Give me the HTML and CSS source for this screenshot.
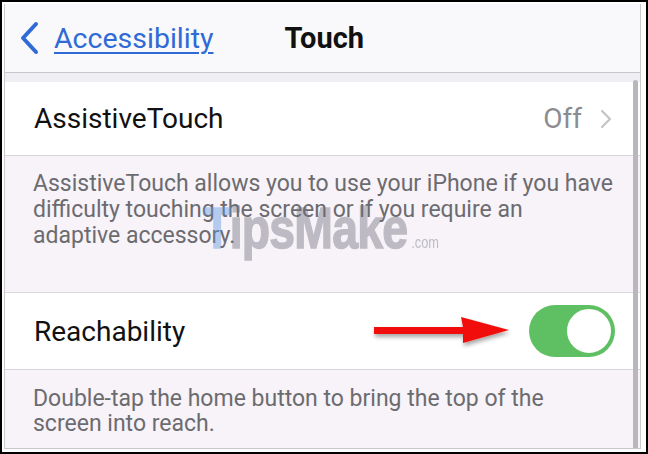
FILE: index.html
```html
<!doctype html>
<html lang="en">
    <head>
        <meta charset="UTF-8" />
        <title>Touch</title>
        <link rel="stylesheet" href="styles.css">
    </head>
    <body>
        <div class="frame">
            <div class="screen">
                <div class="navbar">
                    <a class="back" href="#">
                        <svg class="back-chevron" width="20" height="34" viewBox="0 0 20 34">
                            <path d="M17 3 L4 17 L17 31" fill="none" stroke="#2f6ad6" stroke-width="4" stroke-linecap="round" stroke-linejoin="round"/>
                        </svg>
                        <span class="back-label">Accessibility</span>
                    </a>
                    <h1 class="title">Touch</h1>
                </div>

                <div class="group-gap"></div>

                <div class="row row-first">
                    <span class="row-label">AssistiveTouch</span>
                    <span class="row-value">Off</span>
                    <svg class="row-chevron" width="12" height="20" viewBox="0 0 12 20">
                        <path d="M2 2 L10 10 L2 18" fill="none" stroke="#c4c4c8" stroke-width="2.2" stroke-linecap="round" stroke-linejoin="round"/>
                    </svg>
                </div>
                <div class="footer footer-tall">
                    <p>AssistiveTouch allows you to use your iPhone if you have<br>difficulty touching the screen or if you require an<br>adaptive accessory.</p>
                    <div class="watermark"><span class="wm-t">T</span>ipsMake<span class="wm-com">.com</span></div>
                </div>

                <div class="row row-second">
                    <span class="row-label">Reachability</span>
                    <svg class="arrow" width="146" height="36" viewBox="0 0 146 36">
                        <defs>
                            <filter id="arrowShadow" x="-10%" y="-40%" width="120%" height="180%">
                                <feDropShadow dx="1" dy="3" stdDeviation="2" flood-color="#000" flood-opacity="0.35"/>
                            </filter>
                        </defs>
                        <path d="M7 14 L96 14 L94 4 L142 17 L96 30 L96 21 L7 21 Z" fill="#f20f0f" filter="url(#arrowShadow)"/>
                    </svg>
                    <div class="toggle on"><div class="knob"></div></div>
                </div>
                <div class="footer footer-short">
                    <p>Double-tap the home button to bring the top of the<br>screen into reach.</p>
                </div>

                <div class="scrollbar"></div>
            </div>
        </div>
    </body>
</html>
```

FILE: styles.css
```css
body {
    margin: 0;
    background-color: white;
    font-family: Roboto, "Liberation Sans", Arial, sans-serif;
}
.frame {
    width: 648px;
    height: 454px;
    box-sizing: border-box;
    border: 2px solid #000;
    padding: 2px 5px 3px 2px;
    background: white;
}
.screen {
    position: relative;
    height: 100%;
    box-sizing: border-box;
    border: 1px solid #c9c9cd;
    border-top: none;
    background-color: #f7f3f8;
    overflow: hidden;
}
.navbar {
    height: 68px;
    display: flex;
    align-items: center;
    background-color: #f9f8fb;
    border-bottom: 1px solid #c8c7cc;
}
.back {
    display: flex;
    align-items: center;
    margin-left: 14px;
    color: #2f6ad6;
    text-decoration: none;
}
.back-chevron {
    margin-right: 15px;
}
.back-label {
    font-size: 28.5px;
    text-decoration: underline;
    text-decoration-thickness: 2px;
    text-underline-offset: 4px;
}
.title {
    margin: 0 0 0 71px;
    font-size: 29px;
    font-weight: bold;
    color: #111;
}
.group-gap {
    height: 9px;
    background-color: #efeef2;
}
.row {
    display: flex;
    align-items: center;
    padding: 0 25px 0 29px;
    background-color: #fff;
    border-bottom: 1px solid #d6d5da;
}
.row-first {
    height: 73px;
    padding-right: 28px;
}
.row-second {
    height: 76px;
}
.row-label {
    font-size: 28px;
    color: #111;
    flex: 1;
}
.row-value {
    font-size: 28px;
    color: #8c8c91;
    margin-right: 18px;
}
.footer {
    position: relative;
    padding: 15px 20px 0 28px;
    border-bottom: 1px solid #d9d8dd;
    color: #6c6b70;
    font-size: 23px;
    line-height: 26px;
}
.footer p {
    margin: 0;
}
.footer-tall {
    height: 137px;
    box-sizing: border-box;
}
.footer-short {
    padding-top: 16px;
    line-height: 25px;
    border-bottom: none;
}
/* site stamp laid over the description */
.watermark {
    position: absolute;
    left: 198px;
    top: 43px;
    font-family: "Liberation Sans", Arial, sans-serif;
    font-size: 58px;
    line-height: 1;
    font-weight: bold;
    letter-spacing: -1px;
    white-space: nowrap;
    color: #6e6e7c;
    -webkit-text-stroke: 1.5px #6e6e7c;
    opacity: 0.42;
    transform: scaleX(0.8);
    transform-origin: left top;
}
.wm-t {
    color: #5a96e1;
    -webkit-text-stroke: 1.5px #5a96e1;
}
.wm-com {
    font-size: 16px;
    font-weight: normal;
    letter-spacing: 0;
    -webkit-text-stroke: 0;
    margin-left: 5px;
}
.arrow {
    margin-right: 16px;
}
.toggle {
    width: 86px;
    height: 52px;
    border-radius: 26px;
    background-color: #e5e5ea;
    box-sizing: border-box;
    display: flex;
    align-items: center;
}
.toggle.on {
    background-color: #5ec062;
    justify-content: flex-end;
}
.knob {
    width: 48px;
    height: 48px;
    border-radius: 50%;
    background: #fff;
    border: 2px solid #5ec062;
    box-sizing: border-box;
    margin-right: 2px;
}
.scrollbar {
    position: absolute;
    right: 2px;
    top: 76px;
    bottom: 0;
    width: 5px;
    border-radius: 3px 3px 0 0;
    background-color: #b9b7bc;
}
```
